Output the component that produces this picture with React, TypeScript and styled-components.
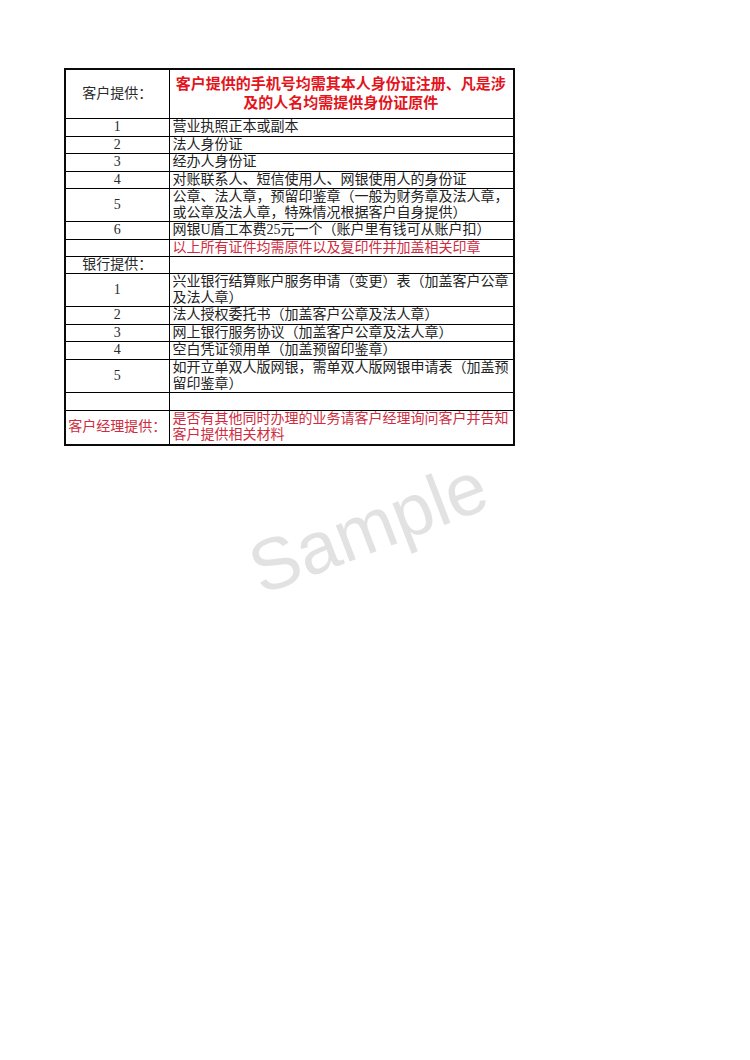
import React from "react";
import styled, { createGlobalStyle } from "styled-components";

const Global = createGlobalStyle`
  html, body { margin: 0; padding: 0; background: #ffffff; }
  body { font-family: "Liberation Serif", "Noto Sans CJK SC", serif; }
`;

const Page = styled.div`
  position: relative;
  width: 750px;
  height: 1060px;
  box-sizing: border-box;
  padding: 68px 0 0 64px;
  overflow: hidden;
  background: #fff;
`;

const Sheet = styled.table`
  border-collapse: collapse;
  width: 451px;
  table-layout: fixed;
  border: 2px solid #0a0a0a;
  font-family: "Liberation Serif", "Noto Sans CJK SC", serif;
  font-size: 14px;
  line-height: 16px;
  color: #222;
`;

const Row = styled.tr<{ $h: number }>`
  height: ${(p) => p.$h}px;
`;

const LabelCell = styled.td<{ $tone?: "red" }>`
  width: 104px;
  padding: 0;
  border: 1px solid #000;
  text-align: center;
  vertical-align: middle;
  white-space: nowrap;
  color: ${(p) => (p.$tone === "red" ? "#cf2c40" : "#2a2a2a")};
`;

const TextCell = styled.td<{ $tone?: "red" | "alert" }>`
  padding: 0 0 0 3px;
  border: 1px solid #000;
  text-align: left;
  vertical-align: middle;
  white-space: nowrap;
  color: ${(p) =>
    p.$tone === "red" ? "#cf2c40" : p.$tone === "alert" ? "#e3141c" : "#222"};
`;

const HeaderText = styled.div`
  text-align: center;
  font-weight: 700;
  font-size: 15px;
  line-height: 19px;
  color: #e3141c;
  padding-right: 4px;
`;

const Watermark = styled.div`
  position: absolute;
  left: 368px;
  top: 527px;
  transform: translate(-50%, -50%) rotate(-21deg);
  font-family: "Liberation Sans", Arial, sans-serif;
  font-size: 73px;
  color: #e2e2e2;
  white-space: nowrap;
  pointer-events: none;
  line-height: 1;
`;

type Item = { label?: string; lines: string[]; h: number; tone?: "red"; labelTone?: "red" };

const customer: Item[] = [
  { label: "1", lines: ["营业执照正本或副本"], h: 18 },
  { label: "2", lines: ["法人身份证"], h: 17 },
  { label: "3", lines: ["经办人身份证"], h: 18 },
  { label: "4", lines: ["对账联系人、短信使用人、网银使用人的身份证"], h: 17 },
  {
    label: "5",
    lines: ["公章、法人章，预留印鉴章（一般为财务章及法人章，", "或公章及法人章，特殊情况根据客户自身提供）"],
    h: 32,
  },
  { label: "6", lines: ["网银U盾工本费25元一个（账户里有钱可从账户扣）"], h: 18 },
  { label: "", lines: ["以上所有证件均需原件以及复印件并加盖相关印章"], h: 17, tone: "red" },
];

const bank: Item[] = [
  { label: "1", lines: ["兴业银行结算账户服务申请（变更）表（加盖客户公章", "及法人章）"], h: 33 },
  { label: "2", lines: ["法人授权委托书（加盖客户公章及法人章）"], h: 18 },
  { label: "3", lines: ["网上银行服务协议（加盖客户公章及法人章）"], h: 17 },
  { label: "4", lines: ["空白凭证领用单（加盖预留印鉴章）"], h: 18 },
  { label: "5", lines: ["如开立单双人版网银，需单双人版网银申请表（加盖预", "留印鉴章）"], h: 32 },
  { label: "", lines: [""], h: 18 },
  {
    label: "客户经理提供：",
    lines: ["是否有其他同时办理的业务请客户经理询问客户并告知", "客户提供相关材料"],
    h: 35,
    tone: "red",
    labelTone: "red",
  },
];

const Lines: React.FC<{ lines: string[] }> = ({ lines }) => (
  <>
    {lines.map((l, i) => (
      <React.Fragment key={i}>
        {i > 0 && <br />}
        {l}
      </React.Fragment>
    ))}
  </>
);

const ItemRow: React.FC<{ item: Item }> = ({ item }) => (
  <Row $h={item.h}>
    <LabelCell $tone={item.labelTone}>{item.label}</LabelCell>
    <TextCell $tone={item.tone}>
      <Lines lines={item.lines} />
    </TextCell>
  </Row>
);

export default function App() {
  return (
    <Page>
      <Global />
      <Sheet>
        <colgroup>
          <col style={{ width: 104 }} />
          <col />
        </colgroup>
        <tbody>
          <Row $h={49}>
            <LabelCell>客户提供：</LabelCell>
            <TextCell>
              <HeaderText>
                客户提供的手机号均需其本人身份证注册、凡是涉
                <br />
                及的人名均需提供身份证原件
              </HeaderText>
            </TextCell>
          </Row>
          {customer.map((it, i) => (
            <ItemRow key={"c" + i} item={it} />
          ))}
          <Row $h={17}>
            <LabelCell>银行提供：</LabelCell>
            <TextCell />
          </Row>
          {bank.map((it, i) => (
            <ItemRow key={"b" + i} item={it} />
          ))}
        </tbody>
      </Sheet>
      <Watermark>Sample</Watermark>
    </Page>
  );
}
